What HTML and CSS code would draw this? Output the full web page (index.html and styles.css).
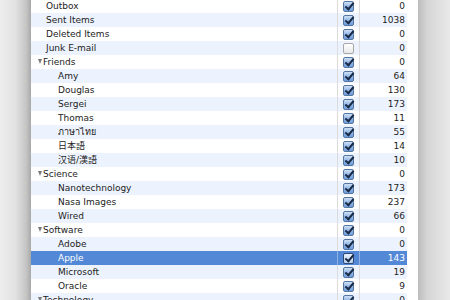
FILE: index.html
```html
<!DOCTYPE html>
<html lang="en">
<head>
    <meta charset="UTF-8">
    <title>Mail Folders</title>
    <link rel="stylesheet" href="styles.css">
</head>
<body>

    <div class="desk">
        <div class="shadow-left"></div>
        <div class="panel">
            <ul class="folders">
                <li class="row"><span class="name top">Outbox</span><span class="cell"><i class="check on"></i></span><span class="count">0</span></li>
                <li class="row"><span class="name top">Sent Items</span><span class="cell"><i class="check on"></i></span><span class="count">1038</span></li>
                <li class="row"><span class="name top">Deleted Items</span><span class="cell"><i class="check on"></i></span><span class="count">0</span></li>
                <li class="row"><span class="name top">Junk E-mail</span><span class="cell"><i class="check"></i></span><span class="count">0</span></li>
                <li class="row"><span class="name group">Friends</span><span class="cell"><i class="check on"></i></span><span class="count">0</span></li>
                <li class="row"><span class="name child">Amy</span><span class="cell"><i class="check on"></i></span><span class="count">64</span></li>
                <li class="row"><span class="name child">Douglas</span><span class="cell"><i class="check on"></i></span><span class="count">130</span></li>
                <li class="row"><span class="name child">Sergei</span><span class="cell"><i class="check on"></i></span><span class="count">173</span></li>
                <li class="row"><span class="name child">Thomas</span><span class="cell"><i class="check on"></i></span><span class="count">11</span></li>
                <li class="row"><span class="name child">ภาษาไทย</span><span class="cell"><i class="check on"></i></span><span class="count">55</span></li>
                <li class="row"><span class="name child">日本語</span><span class="cell"><i class="check on"></i></span><span class="count">14</span></li>
                <li class="row"><span class="name child">汉语/漢語</span><span class="cell"><i class="check on"></i></span><span class="count">10</span></li>
                <li class="row"><span class="name group">Science</span><span class="cell"><i class="check on"></i></span><span class="count">0</span></li>
                <li class="row"><span class="name child">Nanotechnology</span><span class="cell"><i class="check on"></i></span><span class="count">173</span></li>
                <li class="row"><span class="name child">Nasa Images</span><span class="cell"><i class="check on"></i></span><span class="count">237</span></li>
                <li class="row"><span class="name child">Wired</span><span class="cell"><i class="check on"></i></span><span class="count">66</span></li>
                <li class="row"><span class="name group">Software</span><span class="cell"><i class="check on"></i></span><span class="count">0</span></li>
                <li class="row"><span class="name child">Adobe</span><span class="cell"><i class="check on"></i></span><span class="count">0</span></li>
                <li class="row selected"><span class="name child">Apple</span><span class="cell"><i class="check on"></i></span><span class="count">143</span></li>
                <li class="row"><span class="name child">Microsoft</span><span class="cell"><i class="check on"></i></span><span class="count">19</span></li>
                <li class="row"><span class="name child">Oracle</span><span class="cell"><i class="check on"></i></span><span class="count">9</span></li>
                <li class="row"><span class="name group">Technology</span><span class="cell"><i class="check on"></i></span><span class="count">0</span></li>
            </ul>
        </div>
        <div class="shadow-right"></div>
    </div>

</body>
</html>
```

FILE: styles.css
```css
body {
    margin: 0;
    height: 300px;
    overflow: hidden;
    background-color: #ececec;
    font-family: "DejaVu Sans", "Noto Sans CJK JP", sans-serif;
    font-size: 9px;
    color: #1c1c1c;
}

.desk {
    display: flex;
    height: 300px;
}

.shadow-left {
    width: 31px;
    background: linear-gradient(to right, #ededed 0%, #e2e2e2 50%, #c4c4c4 85%, #a9a9a9 100%);
}

.shadow-right {
    flex: 1;
    background: linear-gradient(to right, #bdbdbd 0%, #d6d6d6 30%, #e9e9e9 100%);
}

.panel {
    width: 387px;
    background-color: #fff;
}

.folders {
    list-style: none;
    margin: -1px 0 0 0;
    padding: 0;
    width: 376px;
}

.row {
    display: grid;
    grid-template-columns: 306px 23px 47px;
    height: 14px;
    line-height: 14px;
}

.row:nth-child(even) {
    background-color: #edf3fe;
}

.row.selected {
    background-color: #5288d6;
    color: #fff;
}

.name {
    white-space: nowrap;
}

.name.top {
    padding-left: 15px;
}

.name.child {
    padding-left: 27px;
}

.name.group {
    padding-left: 7px;
}

.name.group::before {
    content: "";
    display: inline-block;
    width: 0;
    height: 0;
    margin-right: 1px;
    border-left: 2.5px solid transparent;
    border-right: 2.5px solid transparent;
    border-top: 5px solid #7a7a7a;
    vertical-align: 1px;
}

.cell {
    display: flex;
    justify-content: center;
    align-items: center;
    border-left: 1px solid #dcdcdc;
    border-right: 1px solid #dcdcdc;
}

.selected .cell {
    border-color: #8fb1e4;
}

.count {
    text-align: right;
    padding-right: 2px;
}

.check {
    position: relative;
    display: block;
    width: 9px;
    height: 9px;
    border: 1px solid #a7a7a7;
    border-radius: 2px;
    background: linear-gradient(#ffffff, #e8e8e8);
}

.check.on {
    border-color: #55779f;
    background: linear-gradient(#cfe0f6, #8db3e6 55%, #6f9ddc);
}

.check.on::after {
    content: "";
    position: absolute;
    left: 3px;
    top: -1px;
    width: 3px;
    height: 7px;
    border-right: 2px solid #1a2b44;
    border-bottom: 2px solid #1a2b44;
    transform: rotate(40deg);
}

.selected .check.on {
    border-color: #2c4a74;
    background: linear-gradient(#e9f1fb, #b8cfee);
}
```
